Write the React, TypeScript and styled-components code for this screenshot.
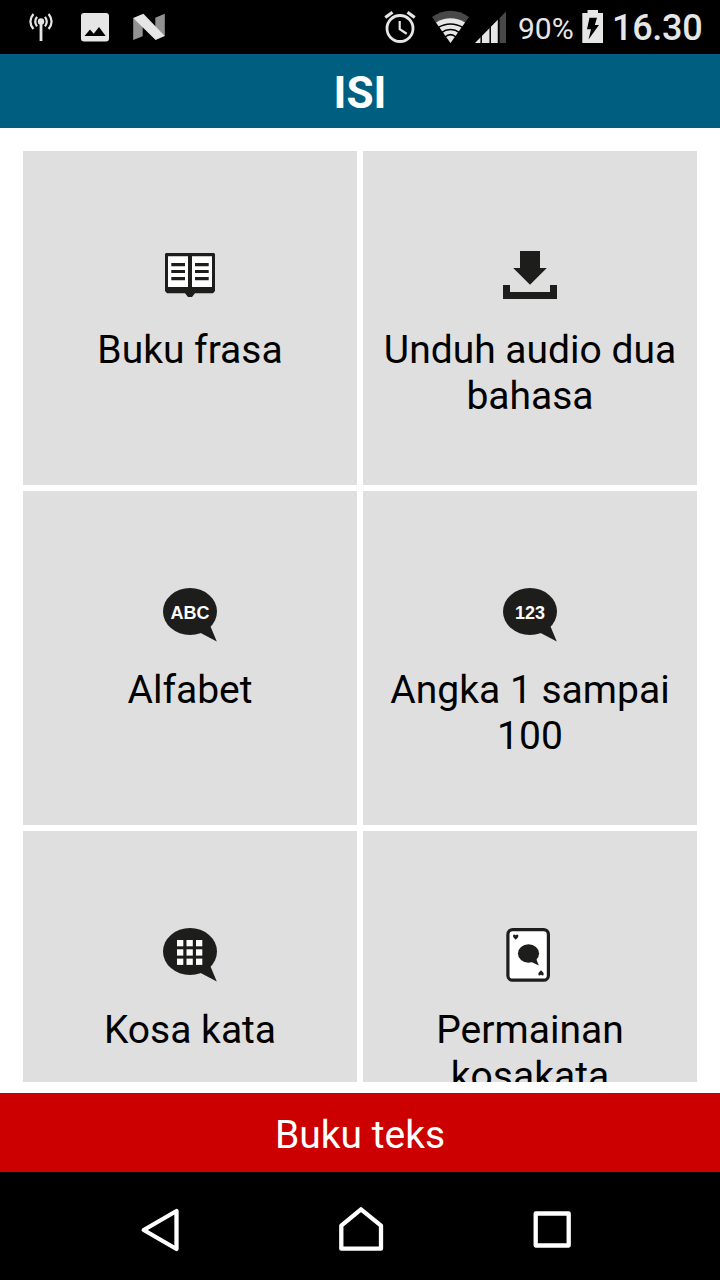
import React from "react";
import styled, { createGlobalStyle } from "styled-components";

const GlobalStyle = createGlobalStyle`
  * { box-sizing: border-box; }
  body { margin: 0; background: #fff; font-family: Roboto, "Liberation Sans", sans-serif; }
  svg { display: block; flex: none; }
`;

const ink = "#1d1d1b";
const light = "#e6e6e6";

const Screen = styled.div`
  width: 720px;
  height: 1280px;
  display: flex;
  flex-direction: column;
  overflow: hidden;
  background: #fff;
`;

const StatusBar = styled.div`
  height: 54px;
  flex: none;
  display: flex;
  justify-content: space-between;
  padding: 0 18px 0 28px;
  background: #000;
  color: ${light};
`;

const StatusGroup = styled.div<{ $gap: number }>`
  display: flex;
  gap: ${(p) => p.$gap}px;
`;

const BatteryText = styled.span`
  width: 56px;
  margin: 0 8px 0 11px;
  font-size: 30px;
  line-height: 57px;
  white-space: nowrap;
`;

const Clock = styled.span`
  width: 90px;
  margin-left: 8px;
  font-size: 36px;
  font-weight: 500;
  letter-spacing: -0.3px;
  line-height: 57px;
  white-space: nowrap;
`;

const Header = styled.header`
  height: 74px;
  flex: none;
  display: flex;
  align-items: center;
  justify-content: center;
  padding-top: 3px;
  background: #005f80;
  color: #fff;
  font-size: 44px;
  font-weight: 700;
`;

const Content = styled.main`
  height: 931px;
  flex: none;
  margin: 23px 23px 11px;
  overflow: hidden;
  display: grid;
  grid-template-columns: 334px 334px;
  grid-auto-rows: 334px;
  gap: 6px;
`;

const Tile = styled.div`
  display: flex;
  flex-direction: column;
  align-items: center;
  gap: 25px;
  padding: 97px 16px 0;
  background: #dfdfdf;
`;

const TileLabel = styled.div`
  color: #000;
  font-size: 39px;
  line-height: 46px;
  text-align: center;
`;

const FooterButton = styled.div`
  height: 79px;
  flex: none;
  display: flex;
  align-items: center;
  justify-content: center;
  padding-top: 5px;
  background: #cc0000;
  color: #fff;
  font-size: 39px;
`;

const NavBar = styled.nav`
  height: 108px;
  flex: none;
  display: flex;
  justify-content: space-between;
  padding: 0 147px 0 140px;
  background: #000;
`;

const BubbleText = styled.text`
  font-family: "Liberation Sans", Arial, sans-serif;
  font-size: 18px;
  font-weight: 700;
  fill: #fff;
  text-anchor: middle;
`;

const Antenna = () => (
  <svg width="26" height="54" viewBox="28 0 26 54" fill="none" stroke={light} strokeWidth="2.2">
    <circle cx="41" cy="21.5" r="3.2" fill={light} stroke="none" />
    <path d="M41 22V41" strokeWidth="2.8" />
    <path d="M37 16.8Q33.6 21.5 37 26.4M45 16.8Q48.4 21.5 45 26.4" />
    <path d="M33.4 14Q27.4 21.5 33.4 29M48.6 14Q54.6 21.5 48.6 29" />
  </svg>
);

const Photo = () => (
  <svg width="28" height="54" viewBox="81 0 28 54">
    <rect x="81" y="13" width="28" height="28.5" rx="3" fill={light} />
    <path d="M84.5 36L90 29.5L93.7 33.8L99 27L105.7 36Z" fill="#000" />
  </svg>
);

const Nougat = () => (
  <svg width="32" height="54" viewBox="133 0 32 54">
    <path d="M133.2 18L142.7 24V36.2L133.2 40Z" fill="#929292" />
    <path d="M155.3 17.7L164.8 13.8V36L155.3 31Z" fill="#929292" />
    <path d="M133.2 18L143.4 13.8L164.8 36L155.6 40Z" fill={light} />
  </svg>
);

const Alarm = () => (
  <svg width="32" height="54" viewBox="384 0 32 54" fill="none" stroke={light} strokeWidth="2.8">
    <circle cx="400" cy="28.5" r="13" />
    <path d="M399.7 21V29.2L406.7 33.7" strokeWidth="2.2" />
    <path d="M385.3 17.5L392.5 12.3M414.7 17.5L407.5 12.3" strokeWidth="3.2" />
  </svg>
);

const Wifi = () => (
  <svg width="38" height="54" viewBox="432 0 38 54">
    <path d="M432 17Q450.500 4.4 469 17L450.500 43Z" fill="#484848" />
    <path d="M436 22.500Q450.500 14.1 465 22.500L450.500 43Z" fill={light} />
    <path
      d="M437.500 27.900Q450.500 20.200 463.500 27.900M441 32.900Q450.500 26.300 460 32.900M445 37Q450.500 32.200 456 37"
      fill="none"
      stroke="#000"
      strokeWidth="1.500"
    />
  </svg>
);

const Signal = () => (
  <svg width="32" height="54" viewBox="475 0 32 54">
    <path d="M475 43L498 19.5V43Z" fill={light} />
    <path d="M499.5 18.2L506 11.5V43H499.5Z" fill="#484848" />
    <path d="M481.2 34V43M490.2 25V43M498.5 18V43" stroke="#000" strokeWidth="1.5" />
  </svg>
);

const Battery = () => (
  <svg width="22" height="54" viewBox="582 0 22 54">
    <path d="M582.3 13H587.5V10H598V13H603V43H582.3Z" fill={light} />
    <path d="M589.5 17.7H597L594.8 25H599L588.5 39.5L591 29.3H587Z" fill="#000" />
  </svg>
);

const Bubble = ({ children }: { children?: React.ReactNode }) => (
  <svg width="54" height="54" viewBox="0 0 54 54">
    <ellipse cx="27" cy="23.5" rx="27" ry="23.5" fill={ink} />
    <path d="M47.3 38L53.8 53.5L36.7 44.5Z" fill={ink} />
    {children}
  </svg>
);

const Book = () => (
  <svg width="54" height="54" viewBox="0 0 54 54">
    <path d="M3 5H51L52 6V43L50 45.3H32L29 49H25L22 45.3H4L2 43V6Z" fill={ink} />
    <path d="M5 8.3H25V39H5ZM29 8.3H49V39H29Z" fill="#fff" />
    <path d="M8.3 16.7H22M8.3 23.5H22M8.3 30.6H22M32 16.7H45.7M32 23.5H45.7M32 30.6H45.7" stroke={ink} strokeWidth="3.2" />
  </svg>
);

const Download = () => (
  <svg width="54" height="54" viewBox="0 0 54 54" fill={ink}>
    <path d="M17 3H37V20H43.8L27 36.7L10.2 20H17Z" />
    <path d="M0 37H7V44H47V37H54V51H0Z" />
  </svg>
);

const Card = () => (
  <svg width="54" height="54" viewBox="0 0 54 54" fill={ink}>
    <rect x="4.9" y="1.6" width="40.5" height="50.6" rx="4.8" fill="#fff" stroke={ink} strokeWidth="3.2" />
    <ellipse cx="25.5" cy="25.5" rx="10.6" ry="9.3" />
    <path d="M33.3 31L35.8 37.5L28.5 34Z" />
    <path d="M12.7 11.8L10.3 9.3Q9.5 6.5 11.3 6.5L12.7 7.3L14.1 6.5Q15.9 6.5 15.1 9.3Z" />
    <path d="M38 42.2L40.4 44.7Q41.2 47.5 39.4 47.5L38 46.7L36.6 47.5Q34.8 47.5 35.6 44.7Z" />
  </svg>
);

const gridCells = [0, 1, 2].flatMap((r) => [0, 1, 2].map((c) => ({ x: 14 + c * 9.5, y: 12 + r * 9.3 })));

const tiles = [
  { label: "Buku frasa", icon: <Book /> },
  { label: "Unduh audio dua bahasa", icon: <Download /> },
  { label: "Alfabet", icon: <Bubble><BubbleText x="27" y="31">ABC</BubbleText></Bubble> },
  { label: "Angka 1 sampai 100", icon: <Bubble><BubbleText x="27" y="31">123</BubbleText></Bubble> },
  {
    label: "Kosa kata",
    icon: (
      <Bubble>
        {gridCells.map((c) => (
          <rect key={`${c.x}-${c.y}`} x={c.x} y={c.y} width="6.3" height="6.3" fill="#fff" />
        ))}
      </Bubble>
    ),
  },
  { label: "Permainan kosakata", icon: <Card /> },
];

export default function App() {
  return (
    <Screen>
      <GlobalStyle />
      <StatusBar>
        <StatusGroup $gap={24}>
          <StatusGroup $gap={27}>
            <Antenna />
            <Photo />
          </StatusGroup>
          <Nougat />
        </StatusGroup>
        <StatusGroup $gap={0}>
          <StatusGroup $gap={16}>
            <Alarm />
            <StatusGroup $gap={5}>
              <Wifi />
              <Signal />
            </StatusGroup>
          </StatusGroup>
          <BatteryText>90%</BatteryText>
          <Battery />
          <Clock>16.30</Clock>
        </StatusGroup>
      </StatusBar>
      <Header>ISI</Header>
      <Content>
        {tiles.map((t) => (
          <Tile key={t.label}>
            {t.icon}
            <TileLabel>{t.label}</TileLabel>
          </Tile>
        ))}
      </Content>
      <FooterButton>Buku teks</FooterButton>
      <NavBar>
        <svg width="42" height="108" viewBox="140 1172 42 108" fill="none" stroke="#fff" strokeWidth="4.3" strokeLinejoin="round">
          <path d="M143.7 1230L176.5 1211V1249Z" />
        </svg>
        <svg width="56" height="108" viewBox="329 1172 56 108" fill="none" stroke="#fff" strokeWidth="4.3" strokeLinejoin="round">
          <path d="M361 1209.3L381 1225.700V1248.700H341.300V1225.700Z" />
        </svg>
        <svg width="42" height="108" viewBox="531 1172 42 108" fill="none" stroke="#fff" strokeWidth="4.3" strokeLinejoin="round">
          <rect x="535.7" y="1213.5" width="33" height="32" />
        </svg>
      </NavBar>
    </Screen>
  );
}
